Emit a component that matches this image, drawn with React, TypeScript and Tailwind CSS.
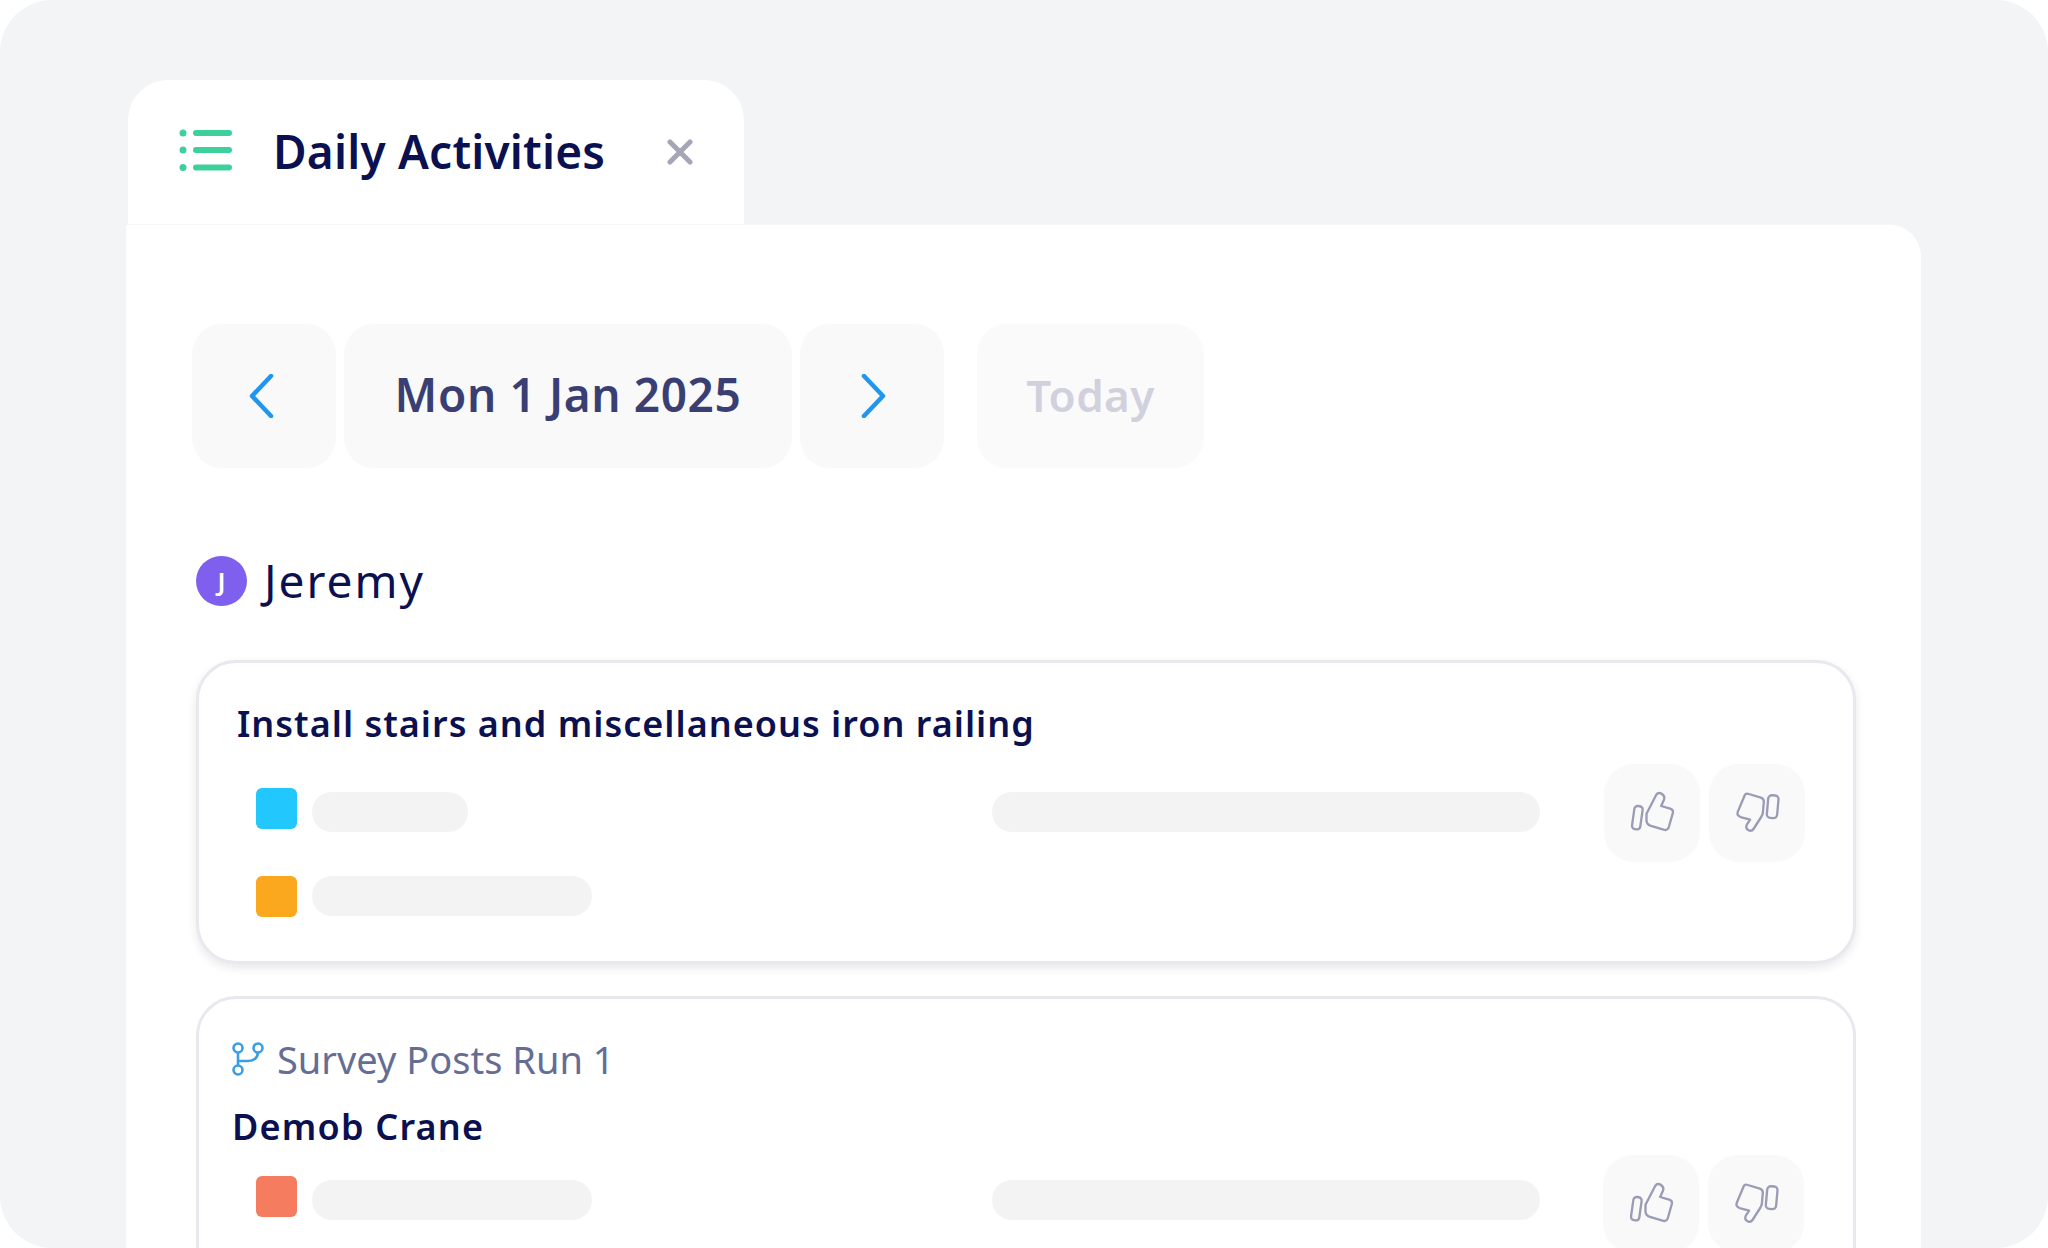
function ThumbUp() {
  return (
    <svg width="47" height="45" viewBox="205 150 140 135" fill="none" stroke="#9a9bb5" strokeWidth="7" strokeLinejoin="round" strokeLinecap="round">
      <rect x="217" y="195" width="25" height="70" rx="10" transform="rotate(8 229 230)" />
      <path d="M257 218 L286 162 Q292 153 302 158 Q314 165 309 177 L301 195 L328 203 Q338 206 336 216 L324 258 Q320 270 308 266 L268 254 Q258 250 257 240 Z" />
    </svg>
  );
}

function ThumbDown() {
  return (
    <svg width="47" height="45" viewBox="520 160 140 135" fill="none" stroke="#9a9bb5" strokeWidth="7" strokeLinejoin="round" strokeLinecap="round">
      <rect x="620" y="173" width="31" height="68" rx="11" transform="rotate(5 635 207)" />
      <path d="M552 172 Q555 166 564 169 L600 180 Q609 183 609 192 L606 226 Q605 232 601 238 L578 274 Q572 283 562 277 Q553 271 558 261 L568 246 L542 239 Q526 234 531 222 Z" />
    </svg>
  );
}

function Vote() {
  return (
    <div className="flex gap-[9px]">
      <div className="w-[96px] h-[98px] rounded-[30px] bg-[#f9f9fa] flex items-center justify-center"><ThumbUp /></div>
      <div className="w-[96px] h-[98px] rounded-[30px] bg-[#f9f9fa] flex items-center justify-center"><ThumbDown /></div>
    </div>
  );
}

function Sq({ c }: { c: string }) {
  return <div className={`w-[41px] h-[41px] rounded-[6px] ${c}`} />;
}

export default function App() {
  return (
    <div className="w-[2048px] h-[1248px] bg-white overflow-hidden font-['Noto_Sans',sans-serif]">
      <div className="h-full bg-[#f3f4f6] rounded-[52px] pt-[80px] pl-[126px] pr-[127px] flex flex-col overflow-hidden">
        <div className="ml-[2px] w-[616px] h-[144px] shrink-0 bg-white rounded-t-[40px] flex items-center">
          <svg className="ml-[50px] mb-[4px]" width="54" height="44" viewBox="0 0 54 44" fill="none" stroke="#3dd09a" strokeLinecap="round">
            <circle cx="5" cy="5" r="3.5" fill="#3dd09a" stroke="none" />
            <circle cx="5" cy="22" r="3.5" fill="#3dd09a" stroke="none" />
            <circle cx="5" cy="39.5" r="3.5" fill="#3dd09a" stroke="none" />
            <path d="M18 5H51M18 22H51M18 39.5H51" strokeWidth="6" />
          </svg>
          <span className="ml-[41px] mb-[3px] w-[394px] text-[46px] leading-[56px] font-semibold text-[#0b1150] tracking-[0.2px] whitespace-nowrap">Daily Activities</span>
          <svg width="26" height="26" viewBox="0 0 26 26" fill="none" stroke="#a4a5b5" strokeWidth="5" strokeLinecap="round">
            <path d="M3 3L23 23M23 3L3 23" />
          </svg>
        </div>
        <div className="flex-1 bg-white rounded-tr-[32px] border-t border-[#f6f6f8] pl-[66px] pr-[65px] pt-[99px]">
          <div className="flex h-[144px]">
            <div className="w-[144px] rounded-[30px] bg-[#f9f9fa] flex items-center pl-[56px]">
              <svg width="28" height="44" viewBox="0 0 28 44" fill="none" stroke="#2196ee" strokeWidth="4.5" strokeLinecap="round" strokeLinejoin="round"><path d="M23 2L4 22L23 42" /></svg>
            </div>
            <div className="ml-[8px] w-[448px] rounded-[30px] bg-[#f9f9fa] flex items-center justify-center pb-[3px] text-[46px] font-semibold tracking-[0.6px] text-[#3a3f73] whitespace-nowrap">Mon 1 Jan 2025</div>
            <div className="ml-[8px] w-[144px] rounded-[30px] bg-[#f9f9fa] flex items-center pl-[59px]">
              <svg width="28" height="44" viewBox="0 0 28 44" fill="none" stroke="#2196ee" strokeWidth="4.5" strokeLinecap="round" strokeLinejoin="round"><path d="M5 2L24 22L5 42" /></svg>
            </div>
            <div className="ml-[33px] w-[227px] rounded-[30px] bg-[#fafafb] flex items-center justify-center pb-[3px] text-[44px] tracking-[0.4px] font-semibold text-[#d1d1de]">Today</div>
          </div>
          <div className="ml-[4px] mt-[88px] flex items-center h-[50px]">
            <div className="w-[51px] h-[50px] rounded-full bg-[#7f60ee] flex items-center justify-center text-white text-[26px] font-semibold">J</div>
            <span className="ml-[17px] mb-[2px] text-[46px] tracking-[2px] text-[#0b1150]">Jeremy</span>
          </div>
          <div className="ml-[4px] mt-[54px] h-[304px] rounded-[40px] border-[3px] border-[#e8e9ef] bg-white shadow-[0_4px_10px_rgba(30,30,60,0.10)] pl-[38px] pr-[49px] pt-[38px]">
            <div className="text-[36px] leading-[46px] tracking-[1px] font-semibold text-[#0b1150] whitespace-nowrap">Install stairs and miscellaneous iron railing</div>
            <div className="flex items-start mt-[41px]">
              <div className="flex flex-col w-[355px] pl-[19px]">
                <div className="flex items-start h-[44px] gap-[15px]">
                  <Sq c="bg-[#22c7fd]" />
                  <div className="w-[156px] h-[40px] rounded-full bg-[#f3f3f3] mt-[4px]" />
                </div>
                <div className="flex items-start h-[41px] gap-[15px] mt-[44px]">
                  <div className="mt-[0px]"><Sq c="bg-[#fba81e]" /></div>
                  <div className="w-[280px] h-[40px] rounded-full bg-[#f3f3f3]" />
                </div>
              </div>
              <div className="ml-[400px] w-[548px] h-[40px] rounded-full bg-[#f3f3f3] mt-[4px] shrink-0" />
              <div className="ml-[64px] -mt-[24px]"><Vote /></div>
            </div>
          </div>
          <div className="ml-[4px] mt-[32px] h-[400px] rounded-[40px] border-[3px] border-[#e8e9ef] bg-white pl-[33px] pr-[49px] pt-[35px]">
            <div className="flex items-center h-[50px]">
              <svg width="32" height="34" viewBox="0 0 32 34" fill="none" stroke="#3b9ee3" strokeWidth="2.6">
                <circle cx="6" cy="6" r="4.5" /><circle cx="26" cy="6" r="4.5" /><circle cx="6" cy="28" r="4.5" />
                <path d="M6 10.5V23.5M6 19H16Q25 19 26 10.5" />
              </svg>
              <span className="ml-[13px] text-[38px] text-[#666d94] whitespace-nowrap">Survey Posts Run 1</span>
            </div>
            <div className="mt-[20px] text-[36px] leading-[46px] tracking-[1.2px] font-semibold text-[#0b1150]">Demob Crane</div>
            <div className="flex items-start mt-[26px]">
              <div className="flex gap-[15px] w-[360px] pl-[24px]">
                <Sq c="bg-[#f57c5f]" />
                <div className="w-[280px] h-[40px] rounded-full bg-[#f3f3f3] mt-[4px]" />
              </div>
              <div className="ml-[400px] w-[548px] h-[40px] rounded-full bg-[#f3f3f3] mt-[4px] shrink-0" />
              <div className="ml-[63px] -mt-[21px]"><Vote /></div>
            </div>
          </div>
        </div>
      </div>
    </div>
  );
}
